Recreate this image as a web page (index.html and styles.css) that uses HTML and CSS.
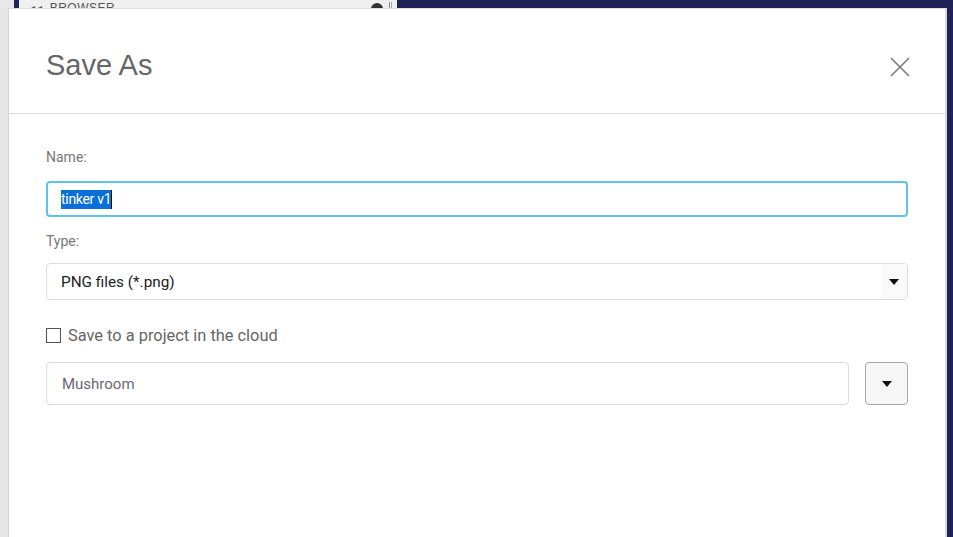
FILE: index.html
```html
<!DOCTYPE html>
<html>
<head>
<meta charset="utf-8">
<link rel="stylesheet" href="styles.css">
</head>
<body>
<div class="app">
  <div class="topbar">
    <div class="tb-gray"></div>
    <div class="tb-navy-thin"></div>
    <div class="tb-browser">
      <span class="tb-title">◂◂ &nbsp;BROWSER</span>
      <span class="tb-dot"></span>
      <span class="tb-pipe"></span>
    </div>
    <div class="tb-navy"></div>
  </div>
  <div class="main">
    <div class="left-strip"></div>
    <div class="dialog">
      <div class="dlg-header">
        <h1 class="dlg-title">Save As</h1>
        <button class="dlg-close" aria-label="Close">
          <svg width="20" height="20" viewBox="0 0 20 20"><path d="M1 1 L19 19 M19 1 L1 19" stroke="#7a7a7a" stroke-width="1.6" fill="none"/></svg>
        </button>
      </div>
      <div class="dlg-body">
        <label class="field-label">Name:</label>
        <div class="text-input focused"><span class="selected">tinker v1</span><span class="caret"></span></div>
        <label class="field-label type-label">Type:</label>
        <div class="select">
          <span class="select-value">PNG files (*.png)</span>
          <span class="select-arrow"><span class="tri"></span></span>
        </div>
        <div class="check-row">
          <span class="checkbox"></span>
          <span class="check-label">Save to a project in the cloud</span>
        </div>
        <div class="project-row">
          <div class="project-input">Mushroom</div>
          <button class="project-btn"><span class="tri"></span></button>
        </div>
      </div>
    </div>
    <div class="right-strip"></div>
  </div>
</div>
</body>
</html>
```

FILE: styles.css
```css
* { box-sizing: border-box; }
html, body { margin: 0; padding: 0; }
body {
  width: 953px;
  height: 537px;
  overflow: hidden;
  font-family: Roboto, "Liberation Sans", Arial, sans-serif;
  background: #1e2257;
}
.app { width: 953px; height: 537px; display: flex; flex-direction: column; }

.topbar { height: 8px; display: flex; overflow: hidden; flex: none; }
.tb-gray { width: 14px; background: #e8e8e8; }
.tb-navy-thin { width: 5px; background: #1e2257; }
.tb-browser {
  width: 378px;
  background: #efefef;
  position: relative;
  overflow: hidden;
  display: flex;
  align-items: flex-start;
}
.tb-title {
  font-family: "Liberation Sans", Arial, sans-serif;
  font-size: 12px;
  line-height: 12px;
  color: #555;
  margin-top: 2px;
  margin-left: 10px;
  letter-spacing: 0.5px;
  white-space: nowrap;
}
.tb-dot {
  position: absolute;
  left: 352px;
  top: 3px;
  width: 12px;
  height: 12px;
  border-radius: 50%;
  background: #333;
}
.tb-pipe {
  position: absolute;
  left: 370px;
  top: 2px;
  width: 3px;
  height: 8px;
  border-left: 1px solid #888;
  border-right: 1px solid #aaa;
}
.tb-navy { flex: 1; background: #1e2257; }

.main { flex: 1; display: flex; min-height: 0; }
.left-strip { width: 9px; background: #e6e6e6; border-right: 1px solid #d4d4d4; }
.right-strip { width: 8px; background: #1e2257; border-left: 2px solid #d8d8d8; }

.dialog {
  flex: 1;
  background: #fff;
  border-top: 1px solid #dcdcdc;
  display: flex;
  flex-direction: column;
}
.dlg-header {
  height: 105px;
  border-bottom: 1px solid #d9d9d9;
  display: flex;
  align-items: center;
  justify-content: space-between;
  padding: 10px 35px 0 37px;
  flex: none;
}
.dlg-title {
  margin: 0;
  font-family: "Liberation Sans", Arial, sans-serif;
  font-weight: normal;
  font-size: 29px;
  line-height: 32px;
  color: #666;
  margin-top: -2px;
}
.dlg-close {
  border: 0;
  background: transparent;
  padding: 0;
  width: 20px;
  height: 20px;
  display: flex;
  margin-top: 2px;
}

.dlg-body {
  padding: 35px 37px 0 37px;
  display: flex;
  flex-direction: column;
}
.field-label {
  font-size: 14px;
  line-height: 16px;
  color: #777;
  margin-bottom: 16px;
}
.type-label { margin-bottom: 14px; }

.text-input {
  height: 36px;
  border: 2px solid #5cc3ef;
  border-radius: 4px;
  display: flex;
  align-items: center;
  padding-left: 13px;
  font-size: 14px;
  color: #fff;
  margin-bottom: 16px;
}
.selected {
  background: #0a6fd6;
  line-height: 19px;
  letter-spacing: -0.3px;
}
.caret { width: 1px; height: 19px; background: #111; }

.select {
  height: 37px;
  border: 1px solid #dcdcdc;
  border-radius: 4px;
  display: flex;
  align-items: stretch;
  overflow: hidden;
}
.select-value {
  flex: 1;
  display: flex;
  align-items: center;
  padding-left: 14px;
  font-size: 15.3px;
  color: #222;
}
.select-arrow {
  width: 26px;
  background: #fafafa;
  display: flex;
  align-items: center;
  justify-content: center;
}
.tri {
  width: 0;
  height: 0;
  border-left: 5px solid transparent;
  border-right: 5px solid transparent;
  border-top: 6px solid #111;
}

.check-row {
  margin-top: 26px;
  height: 18px;
  display: flex;
  align-items: center;
}
.checkbox {
  width: 15px;
  height: 15px;
  border: 1px solid #555;
  background: #fff;
  margin-right: 7px;
}
.check-label {
  font-size: 16.4px;
  color: #666;
}

.project-row {
  margin-top: 18px;
  display: flex;
  gap: 16px;
}
.project-input {
  flex: 1;
  height: 43px;
  border: 1px solid #dcdcdc;
  border-radius: 4px;
  display: flex;
  align-items: center;
  padding-left: 15px;
  font-size: 15px;
  color: #6b6677;
}
.project-btn {
  width: 43px;
  height: 43px;
  border: 1px solid #a8a8a8;
  border-radius: 4px;
  background: #f6f6f6;
  display: flex;
  align-items: center;
  justify-content: center;
  padding: 0;
}
```
